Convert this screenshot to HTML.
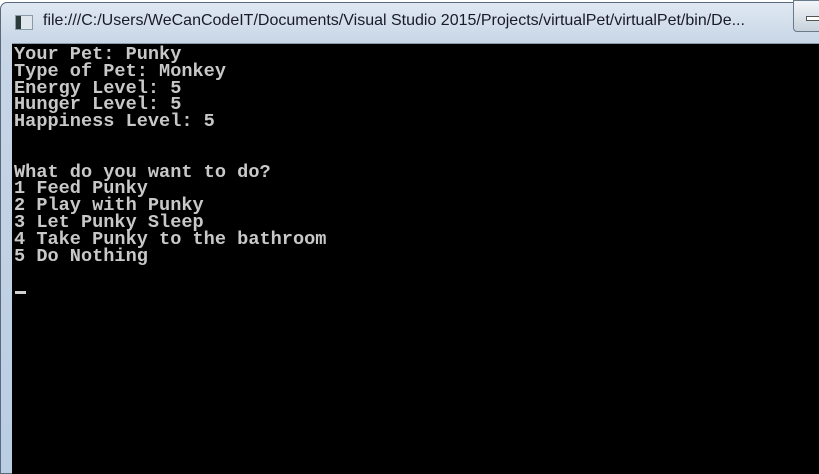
<!DOCTYPE html>
<html><head><style>
body{margin:0;width:819px;height:460px;overflow:hidden;background:#fff;position:relative}
.frame{position:absolute;left:0;top:2px;width:840px;height:470px;border-radius:7px 0 0 0;background:linear-gradient(#dfe8f2,#c8d6e6 40px,#b9cde3);border:1px solid #5a6a7c}
.title{position:absolute;left:43px;top:12px;font:16px "Liberation Sans",sans-serif;color:#1a1a2a;white-space:nowrap}
.icon{position:absolute;left:15px;top:15px;width:16px;height:13px;background:#2a3a3a;border:1px solid #8a9aa8}
.icon:after{content:"";position:absolute;left:5px;top:0;width:11px;height:13px;background:#dfe6ec}
.close{position:absolute;left:793px;top:0;width:40px;height:30px;border:1px solid #6a7a8a;border-radius:0 0 4px 4px;background:linear-gradient(#f2f5f8,#c8d2dc)}
.close:after{content:"";position:absolute;left:12px;top:15px;width:14px;height:3px;background:#fff;border:1px solid #555}
.con{position:absolute;left:12px;top:43px;width:820px;height:430px;background:#000;border-top:1px solid #8a9cb0}
pre{margin:0;position:absolute;left:2px;top:3px;font:bold 18.6px/16.8px "Liberation Mono",monospace;color:#c8c8c8}
.cur{position:absolute;left:15px;top:291px;width:11px;height:3px;background:#d0d0d0}
</style></head><body>
<div class="frame"></div>
<div class="icon"></div>
<div class="title">file:///C:/Users/WeCanCodeIT/Documents/Visual Studio 2015/Projects/virtualPet/virtualPet/bin/De...</div>
<div class="close"></div>
<div class="con"><pre>Your Pet: Punky
Type of Pet: Monkey
Energy Level: 5
Hunger Level: 5
Happiness Level: 5


What do you want to do?
1 Feed Punky
2 Play with Punky
3 Let Punky Sleep
4 Take Punky to the bathroom
5 Do Nothing</pre></div>
<div class="cur"></div>
</body></html>
